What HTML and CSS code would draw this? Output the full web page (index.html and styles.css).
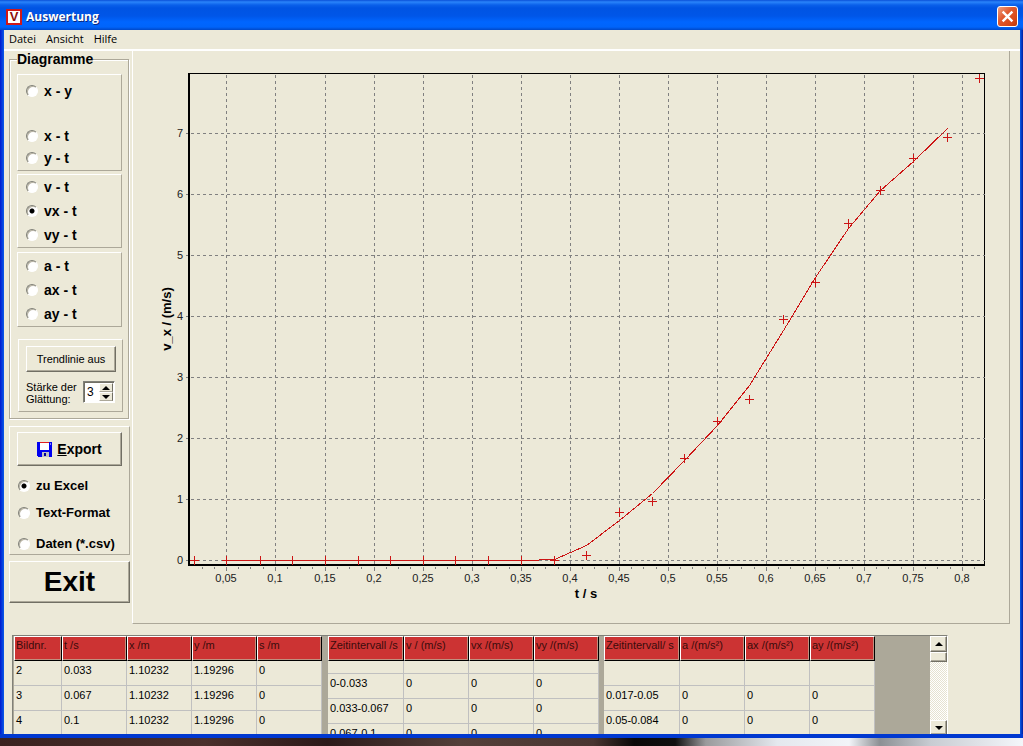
FILE: index.html
```html
<!DOCTYPE html>
<html lang="de">
<head>
<meta charset="utf-8">
<title>Auswertung</title>
<link rel="stylesheet" href="styles.css">
</head>
<body>
<div class="window">
  <header class="titlebar">
    <span class="app-icon" aria-hidden="true">V</span>
    <h1 class="title">Auswertung</h1>
    <button class="close" type="button" aria-label="Schließen">
      <svg width="13" height="13" viewBox="0 0 12 12"><path d="M1.5 1.5l9 9M10.5 1.5l-9 9" stroke="#fff" stroke-width="2.2"/></svg>
    </button>
  </header>
  <nav class="menubar">
    <button type="button">Datei</button>
    <button type="button">Ansicht</button>
    <button type="button">Hilfe</button>
  </nav>
  <main class="content">
    <div class="top">
      <aside class="sidebar">
        <fieldset class="diagrams">
          <legend>Diagramme</legend>
          <div class="group group-xy">
            <label class="radio first"><input type="radio" name="d">x - y</label>
            <label class="radio"><input type="radio" name="d">x - t</label>
            <label class="radio"><input type="radio" name="d">y - t</label>
          </div>
          <div class="group">
            <label class="radio"><input type="radio" name="d">v - t</label>
            <label class="radio"><input type="radio" name="d" checked>vx - t</label>
            <label class="radio"><input type="radio" name="d">vy - t</label>
          </div>
          <div class="group group-a">
            <label class="radio"><input type="radio" name="d">a - t</label>
            <label class="radio"><input type="radio" name="d">ax - t</label>
            <label class="radio"><input type="radio" name="d">ay - t</label>
          </div>
          <div class="group trend">
            <button class="btn" type="button">Trendlinie aus</button>
            <div class="smooth">
              <label for="smooth">Stärke der Glättung:</label>
              <div class="spinner">
                <input id="smooth" type="number" value="3">
                <div class="steps">
                  <button type="button" aria-label="Mehr"><svg width="8" height="4" viewBox="0 0 8 4"><path d="M0 4l4-4 4 4z"/></svg></button>
                  <button type="button" aria-label="Weniger"><svg width="8" height="4" viewBox="0 0 8 4"><path d="M0 0l4 4 4-4z"/></svg></button>
                </div>
              </div>
            </div>
          </div>
        </fieldset>
        <section class="export">
          <button class="btn btn-export" type="button">
            <svg width="15" height="15" viewBox="0 0 15 15" shape-rendering="crispEdges">
              <path d="M0 0h14l1 1v14H1l-1-1z" fill="#0000f0"/>
              <path d="M3 1h9v7H3z" fill="#fff"/><path d="M3 0h9v1H3z" fill="#e02020"/>
              <path d="M5 10h7v5H5z" fill="#c0c0c0"/><path d="M7 11h2v3H7z" fill="#0000a0"/>
              <path d="M13 1h1v2h-1z" fill="#8080ff"/>
            </svg>
            <span><u>E</u>xport</span>
          </button>
          <label class="radio"><input type="radio" name="e" checked>zu Excel</label>
          <label class="radio text-format"><input type="radio" name="e">Text-Format</label>
          <label class="radio"><input type="radio" name="e">Daten (*.csv)</label>
        </section>
        <button class="btn btn-exit" type="button">Exit</button>
      </aside>

      <section class="chart">
        <svg viewBox="133 51 876 572" role="img" aria-label="v_x über t">
          <g transform="translate(.5 .5)" fill="none" shape-rendering="crispEdges">
            <path class="frame" d="M189 73H984V565"/>
            <path class="grid" d="M226 563V73M275 563V73M325 563V73M374 563V73M423 563V73M472 563V73M521 563V73M570 563V73M619 563V73M668 563V73M717 563V73M766 563V73M815 563V73M864 563V73M913 563V73M962 563V73"/>
            <path class="grid" d="M190 133H984M190 194H984M190 255H984M190 316H984M190 377H984M190 438H984M190 499H984M190 560H984"/>
            <path class="tick" d="M185 133h3M185 194h3M185 255h3M185 316h3M185 377h3M185 438h3M185 499h3M185 560h3"/>
            <path class="tick" d="M187 87h1M187 103h1M187 118h1M187 148h1M187 164h1M187 179h1M187 209h1M187 225h1M187 240h1M187 270h1M187 286h1M187 301h1M187 331h1M187 347h1M187 362h1M187 392h1M187 408h1M187 423h1M187 453h1M187 469h1M187 484h1M187 514h1M187 530h1M187 545h1"/>
            <path class="tick" d="M226 566v4M275 566v4M325 566v4M374 566v4M423 566v4M472 566v4M521 566v4M570 566v4M619 566v4M668 566v4M717 566v4M766 566v4M815 566v4M864 566v4M913 566v4M962 566v4"/>
            <path class="tick" d="M202 566v2M214 566v2M238 566v2M250 566v2M263 566v2M287 566v2M300 566v2M312 566v2M337 566v2M349 566v2M361 566v2M386 566v2M398 566v2M410 566v2M435 566v2M447 566v2M460 566v2M484 566v2M496 566v2M509 566v2M533 566v2M545 566v2M558 566v2M582 566v2M594 566v2M607 566v2M631 566v2M643 566v2M656 566v2M680 566v2M692 566v2M705 566v2M729 566v2M741 566v2M754 566v2M778 566v2M790 566v2M803 566v2M827 566v2M839 566v2M852 566v2M876 566v2M888 566v2M901 566v2M925 566v2M937 566v2M950 566v2M974 566v2"/>
          </g>
          <path class="axis" d="M189 73V565H985" shape-rendering="crispEdges"/>
          <g transform="translate(.5 .5)" fill="none">
            <path class="series" shape-rendering="crispEdges" d="M226 560H537L540 559H554L586 545L619 520L652 493L684 460L717 425L749 385L783 330L815 277L848 228L880 190L913 161L947 128"/>
            <path class="cross" d="M189.500 560h9M194 555.500v9M221.500 560h9M226 555.500v9M255.500 560h9M260 555.500v9M287.500 560h9M292 555.500v9M320.500 560h9M325 555.500v9M353.500 560h9M358 555.500v9M385.500 560h9M390 555.500v9M418.500 560h9M423 555.500v9M450.500 560h9M455 555.500v9M483.500 560h9M488 555.500v9M516.500 560h9M521 555.500v9M549.500 560h9M554 555.500v9M581.500 555h9M586 550.500v9M614.500 512h9M619 507.500v9M647.500 501h9M652 496.500v9M679.500 458h9M684 453.500v9M712.500 421h9M717 416.500v9M744.500 399h9M749 394.500v9M778.500 319h9M783 314.500v9M810.500 282h9M815 277.500v9M843.500 223h9M848 218.500v9M875.500 190h9M880 185.500v9M908.500 158h9M913 153.500v9M942.500 137h9M947 132.500v9M974.500 78h9M979 73.500v9"/>
          </g>
          <g class="labels" text-anchor="end">
            <text x="183" y="137">7</text><text x="183" y="198">6</text><text x="183" y="259">5</text><text x="183" y="320">4</text><text x="183" y="381">3</text><text x="183" y="442">2</text><text x="183" y="503">1</text><text x="183" y="564">0</text>
          </g>
          <g class="labels" text-anchor="middle">
            <text x="226" y="582">0,05</text><text x="275" y="582">0,1</text><text x="325" y="582">0,15</text><text x="374" y="582">0,2</text><text x="423" y="582">0,25</text><text x="472" y="582">0,3</text><text x="521" y="582">0,35</text><text x="570" y="582">0,4</text><text x="619" y="582">0,45</text><text x="668" y="582">0,5</text><text x="717" y="582">0,55</text><text x="766" y="582">0,6</text><text x="815" y="582">0,65</text><text x="864" y="582">0,7</text><text x="913" y="582">0,75</text><text x="962" y="582">0,8</text>
          </g>
          <g class="axis-title" text-anchor="middle">
            <text x="586" y="598">t / s</text>
            <text transform="translate(171 319) rotate(-90)">v_x / (m/s)</text>
          </g>
        </svg>
      </section>
    </div>

    <section class="tables">
      <table>
        <colgroup><col class="c-nr"><col class="c"><col class="c"><col class="c"><col class="c"></colgroup>
        <thead><tr><th>Bildnr.</th><th>t /s</th><th>x /m</th><th>y /m</th><th>s /m</th></tr></thead>
        <tbody>
          <tr><td>2</td><td>0.033</td><td>1.10232</td><td>1.19296</td><td>0</td></tr>
          <tr><td>3</td><td>0.067</td><td>1.10232</td><td>1.19296</td><td>0</td></tr>
          <tr><td>4</td><td>0.1</td><td>1.10232</td><td>1.19296</td><td>0</td></tr>
        </tbody>
      </table>
      <table>
        <colgroup><col class="c-int"><col class="c"><col class="c"><col class="c"></colgroup>
        <thead><tr><th>Zeitintervall /s</th><th>v / (m/s)</th><th>vx /(m/s)</th><th>vy /(m/s)</th></tr></thead>
        <tbody>
          <tr class="half"><td></td><td></td><td></td><td></td></tr>
          <tr><td>0-0.033</td><td>0</td><td>0</td><td>0</td></tr>
          <tr><td>0.033-0.067</td><td>0</td><td>0</td><td>0</td></tr>
          <tr><td>0.067-0.1</td><td>0</td><td>0</td><td>0</td></tr>
        </tbody>
      </table>
      <table>
        <colgroup><col class="c-int"><col class="c"><col class="c"><col class="c"></colgroup>
        <thead><tr><th>Zeitintervall/ s</th><th>a /(m/s²)</th><th>ax /(m/s²)</th><th>ay /(m/s²)</th></tr></thead>
        <tbody>
          <tr><td></td><td></td><td></td><td></td></tr>
          <tr><td>0.017-0.05</td><td>0</td><td>0</td><td>0</td></tr>
          <tr><td>0.05-0.084</td><td>0</td><td>0</td><td>0</td></tr>
        </tbody>
      </table>
      <div class="scrollbar">
        <button type="button" aria-label="Nach oben"><svg width="8" height="4" viewBox="0 0 8 4"><path d="M0 4l4-4 4 4z"/></svg></button>
        <div class="thumb"></div>
        <button class="down" type="button" aria-label="Nach unten"><svg width="8" height="4" viewBox="0 0 8 4"><path d="M0 0l4 4 4-4z"/></svg></button>
      </div>
    </section>
  </main>
</div>
<div class="desktop"></div>
</body>
</html>
```
FILE: styles.css
```css
* { box-sizing: border-box; }

body {
  margin: 0;
  height: 100vh;
  display: flex;
  flex-direction: column;
  overflow: hidden;
  font: 11px/14px "Liberation Sans", Arial, sans-serif;
  color: #000;
}

button, input { font: inherit; color: inherit; margin: 0; padding: 0; border: 0; background: none; }

.window {
  flex: 1;
  min-height: 0;
  display: flex;
  flex-direction: column;
  background: linear-gradient(90deg, #0019cf, #0a5be8 4px, #0a5be8 calc(100% - 3px), #001ea0);
  padding: 0 3px 4px 4px;
  box-shadow: inset 0 -4px #0038d0;
}

.desktop {
  flex: none;
  height: 8px;
  background: linear-gradient(90deg, #3a2220, #4a302c 20%, #2c1a1a 32%, #54403a 45%, #4a3632 58%, #0a0808 62%, #101010 66%, #9a9a9c 69%, #e4e8ee 76%, #f2f4f8 83%, #8c9094 86%, #c8ccd2 91%, #f4f6fa);
}

/* title bar */
.titlebar {
  flex: none;
  height: 30px;
  margin: 0 -3px 0 -4px;
  padding: 3px 5px 0 6px;
  display: flex;
  align-items: center;
  background: linear-gradient(#0a50d8, #2a84fa 2px, #0a60ea 5px, #0054e3 8px, #0056e8 16px, #0066ff 22px, #0064fa 27px, #0048c8 30px);
}
.app-icon {
  width: 16px;
  height: 16px;
  border: 2px solid #d01818;
  background: #fff;
  color: #8c1010;
  font-weight: bold;
  font-size: 13px;
  line-height: 12px;
  text-align: center;
}
.title {
  flex: 1;
  margin: 0 0 0 4px;
  font: bold 12px/18px "Open Sans", "Noto Sans", sans-serif;
  color: #fff;
  text-shadow: 1px 1px #0a2a80;
}
.close {
  width: 21px;
  height: 21px;
  display: grid;
  place-items: center;
  border: 1px solid #fff;
  border-radius: 3px;
  background: linear-gradient(135deg, #f0a080, #e05a30 40%, #d84818 75%, #b83808);
}

/* menu */
.menubar {
  flex: none;
  height: 21px;
  padding: 0 5px 2px;
  display: flex;
  gap: 10px;
  background: #ece9d8;
  border-bottom: 2px solid #fff;
  font: 11px/17px "Open Sans", "Noto Sans", sans-serif;
}

.content {
  flex: 1;
  min-height: 0;
  display: flex;
  flex-direction: column;
  background: #ece9d8;
}
.top { flex: none; display: flex; align-items: stretch; padding-right: 10px; gap: 2px; }

/* sidebar */
.sidebar { flex: none; width: 126px; padding-left: 5px; }
.diagrams {
  margin: 0;
  min-width: 0;
  padding: 7px 6px 6px 7px;
  border: 1px solid #aca899;
  box-shadow: inset 1px 1px #fff, 1px 1px #fff;
  width: 120px;
}
.diagrams legend {
  padding: 0;
  background: #ece9d8;
  font-size: 14px;
  line-height: 16px;
  font-weight: bold;
}
.group {
  width: 105px;
  border: 1px solid;
  border-color: #fff #aca899 #aca899 #fff;
  margin-bottom: 3px;
}
.radio {
  display: flex;
  align-items: center;
  gap: 6px;
  height: 24px;
  padding-left: 8px;
  font-weight: bold;
  font-size: 14px;
  line-height: 16px;
}
.group-xy { padding: 4px 0 1px; }
.group-xy .radio { height: 22px; }
.group-xy .first { height: 24px; margin-bottom: 22px; }
.group-a { margin-top: 4px; padding-top: 1px; }

.radio input {
  appearance: none;
  flex: none;
  width: 12px;
  height: 12px;
  border-radius: 50%;
  border: 1px solid;
  border-color: #808078 #fff #fff #808078;
  background: #fff;
  box-shadow: inset 1px 1px #b8b4a4;
}
.radio input:checked { background: radial-gradient(circle at center, #000 2px, #fff 3px); }

.btn {
  display: flex;
  align-items: center;
  justify-content: center;
  background: #ece9d8;
  border: 1px solid;
  border-color: #fff #716f64 #716f64 #fff;
  box-shadow: inset -1px -1px #aca899;
}
.trend { margin: 12px 0 0 1px; padding: 6px 7px; }
.trend .btn { width: 90px; height: 26px; }
.smooth {
  display: flex;
  justify-content: space-between;
  margin-top: 9px;
  line-height: 12px;
}
.smooth label { width: 56px; }
.spinner {
  width: 32px;
  height: 22px;
  display: flex;
  border: 1px solid;
  border-color: #808078 #fff #fff #808078;
  box-shadow: inset 1px 1px #716f64;
  background: #fff;
  padding: 1px;
}
.spinner input { flex: 1; min-width: 0; padding-left: 2px; font-size: 12px; appearance: textfield; outline: 0; }
.spinner input::-webkit-inner-spin-button { display: none; }
.steps { width: 14px; display: flex; flex-direction: column; }
.steps button {
  flex: 1;
  display: grid;
  place-items: center;
  background: #ece9d8;
  border: 1px solid;
  border-color: #fff #716f64 #aca899 #fff;
}

.export {
  width: 121px;
  margin-top: 7px;
  padding: 5px 7px 0;
  border: 1px solid;
  border-color: #fff #aca899 #aca899 #fff;
}
.btn-export {
  width: 105px;
  height: 34px;
  gap: 5px;
  margin-bottom: 8px;
  font-weight: bold;
  font-size: 14px;
}
.export .radio { padding-left: 1px; height: 24px; font-size: 13px; }
.export .text-format { margin: 3px 0 9px; }
.export .radio:last-child { height: 20px; }
.btn-exit {
  width: 121px;
  height: 42px;
  margin-top: 6px;
  font-weight: bold;
  font-size: 28px;
  line-height: 32px;
}

/* chart */
.chart {
  flex: 1;
  min-width: 0;
  border: 1px solid;
  border-color: #fff #aca899 #aca899 #fff;
  border-top: 0;
}
.chart svg { display: block; width: 100%; height: auto; }
.frame { stroke: #000; }
.grid { stroke: #808080; stroke-dasharray: 3 3; }
.tick { stroke: #808080; }
.axis { fill: none; stroke: #000; stroke-width: 2; }
.series { stroke: #cc1414; }
.cross { stroke: #cc1414; }
.labels { font-size: 11px; fill: #202020; }
.axis-title { font-size: 13px; font-weight: bold; }

/* data tables */
.tables {
  flex: 1;
  min-height: 0;
  align-self: flex-start;
  display: flex;
  align-items: flex-start;
  gap: 5px;
  width: 936px;
  margin: 11px 0 0 8px;
  overflow: hidden;
  background: #aca899;
  border: 1px solid;
  border-color: #808078 #fff #aca899 #808078;
  border-bottom: 0;
  padding-left: 1px;
}
table { flex: none; border-collapse: separate; border-spacing: 0; table-layout: fixed; width: 271px; background: #ece9d8; }
table:first-child { width: 308px; margin-right: 1px; }
.c-nr { width: 48px; }
.c-int { width: 76px; }
.c { width: 65px; }
th, td {
  height: 25px;
  padding: 2px 0 0 2px;
  vertical-align: top;
  text-align: left;
  font-weight: normal;
  white-space: nowrap;
}
th {
  padding: 1px 0 0 1px;
  background: #cc3333;
  color: #3a0c0c;
  border: 1px solid;
  border-color: #fff #000 #000 #fff;
  box-shadow: inset -1px -1px #c09080;
}
td { border: solid #c0c0c0; border-width: 0 1px 1px 0; }
.half td { height: 13px; padding: 0; }

.scrollbar {
  align-self: stretch;
  width: 17px;
  margin-left: auto;
  display: flex;
  flex-direction: column;
  background: conic-gradient(#fff 25%, #e6e2d0 0 50%, #fff 0 75%, #e6e2d0 0) 0 0 / 2px 2px;
}
.scrollbar button, .thumb {
  height: 16px;
  display: grid;
  place-items: center;
  background: #ece9d8;
  border: 1px solid;
  border-color: #fff #716f64 #716f64 #fff;
  box-shadow: inset -1px -1px #aca899;
}
.scrollbar .thumb { height: 10px; }
.scrollbar .down { margin-top: auto; height: 14px; border-bottom: 0; }
```
